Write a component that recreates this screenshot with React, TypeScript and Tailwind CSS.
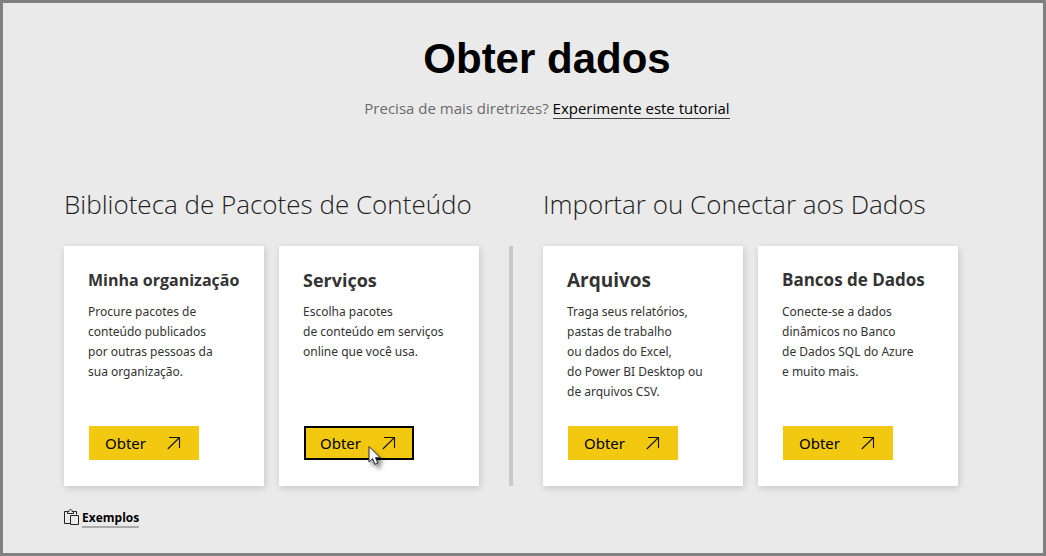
type CardData = {
  title: string;
  titleClass: string;
  lines: string[];
  highlighted?: boolean;
};

type SectionData = { heading: string; cards: CardData[] };

const sections: SectionData[] = [
  {
    heading: "Biblioteca de Pacotes de Conteúdo",
    cards: [
      {
        title: "Minha organização",
        titleClass: "text-[16px]",
        lines: ["Procure pacotes de", "conteúdo publicados", "por outras pessoas da", "sua organização."],
      },
      {
        title: "Serviços",
        titleClass: "text-[18px]",
        lines: ["Escolha pacotes", "de conteúdo em serviços", "online que você usa."],
        highlighted: true,
      },
    ],
  },
  {
    heading: "Importar ou Conectar aos Dados",
    cards: [
      {
        title: "Arquivos",
        titleClass: "text-[19px]",
        lines: [
          "Traga seus relatórios,",
          "pastas de trabalho",
          "ou dados do Excel,",
          "do Power BI Desktop ou",
          "de arquivos CSV.",
        ],
      },
      {
        title: "Bancos de Dados",
        titleClass: "text-[17px]",
        lines: ["Conecte-se a dados", "dinâmicos no Banco", "de Dados SQL do Azure", "e muito mais."],
      },
    ],
  },
];

function ArrowIcon() {
  return (
    <svg width="14" height="14" viewBox="0 0 14 14" fill="none" stroke="#111" strokeWidth="1.1" aria-hidden="true">
      <path d="M2 1.5H12.5V12M12.5 1.5L0.8 13" />
    </svg>
  );
}

function ClipboardIcon() {
  return (
    <svg width="15" height="17" viewBox="0 0 15 17" fill="none" stroke="#222" strokeWidth="1" aria-hidden="true">
      <path d="M6 14.5H0.5V2.5H3.5M9.5 2.5H12.5V5.5" />
      <path d="M3.5 4.5V2.5H5V1.5L6 0.5H7L8 1.5V2.5H9.5V4.5Z" />
      <path d="M6.5 6.5H14.5V15.5H6.5Z" fill="#eaeaea" />
    </svg>
  );
}

function Pointer() {
  return (
    <svg
      className="pointer-events-none absolute left-16 top-5 overflow-visible drop-shadow-[3px_4px_2px_rgba(0,0,0,0.5)]"
      width="14"
      height="21"
      viewBox="0 0 14 21"
      aria-hidden="true"
    >
      <path
        d="M1 0.5V16L4.6 12.7L7 18.3L9.8 17.1L7.5 11.7H12.2Z"
        fill="#f8f8fb"
        stroke="#25253c"
        strokeWidth="1"
      />
    </svg>
  );
}

function Card({ title, titleClass, lines, highlighted }: CardData) {
  return (
    <article className="flex min-h-60 min-w-0 flex-1 flex-col bg-white px-6 pt-5 pb-[26px] shadow-[1px_2px_7px_rgba(0,0,0,0.16)]">
      <h3 className={`whitespace-nowrap font-bold leading-7 text-[#333] ${titleClass}`}>{title}</h3>
      <p className="mt-2 whitespace-nowrap font-['Noto_Sans',sans-serif] text-[12px] leading-5 text-[#333]">
        {lines.map((line) => (
          <span key={line} className="block">
            {line}
          </span>
        ))}
      </p>
      <div className="relative mt-auto w-[110px] translate-x-px">
        <button
          type="button"
          className={`flex h-[34px] w-full items-center justify-between bg-[#f2c811] font-['Noto_Sans',sans-serif] text-[15px] text-black ${
            highlighted ? "border-2 border-black pl-3.5 pr-4" : "pl-4 pr-[18px]"
          }`}
        >
          Obter
          <ArrowIcon />
        </button>
        {highlighted && <Pointer />}
      </div>
    </article>
  );
}

function Section({ heading, cards }: SectionData) {
  return (
    <section className="min-w-0 flex-1">
      <h2 className="whitespace-nowrap text-[26px] font-light leading-9 text-[#222]">{heading}</h2>
      <div className="mt-6 flex gap-[15px]">
        {cards.map((card) => (
          <Card key={card.title} {...card} />
        ))}
      </div>
    </section>
  );
}

export default function App() {
  return (
    <main className="min-h-screen border-[3px] border-[#808080] bg-[#eaeaea] font-['Open_Sans',sans-serif]">
      <header className="pt-[30px] pl-12 text-center">
        <h1 className="font-['Liberation_Sans',sans-serif] text-[42px] font-bold leading-[52px] text-black">
          Obter dados
        </h1>
        <p className="mt-[11px] text-[15px] leading-6 text-[#6b6b6b]">
          Precisa de mais diretrizes?{" "}
          <a href="#tutorial" className="inline-block border-b border-[#444] leading-5 text-black">
            Experimente este tutorial
          </a>
        </p>
      </header>

      <div className="mt-[66px] flex max-w-[1016px] gap-[30px] px-[61px]">
        <Section {...sections[0]} />
        <div className="mt-[60px] w-1 shrink-0 bg-[#c8c8c8]" />
        <Section {...sections[1]} />
      </div>

      <footer className="mt-[23px] flex items-start gap-[3px] pl-[61px]">
        <ClipboardIcon />
        <a href="#exemplos" className="border-b-2 border-[#aaa] text-[12px] font-bold leading-[17px] text-black">
          Exemplos
        </a>
      </footer>
    </main>
  );
}
